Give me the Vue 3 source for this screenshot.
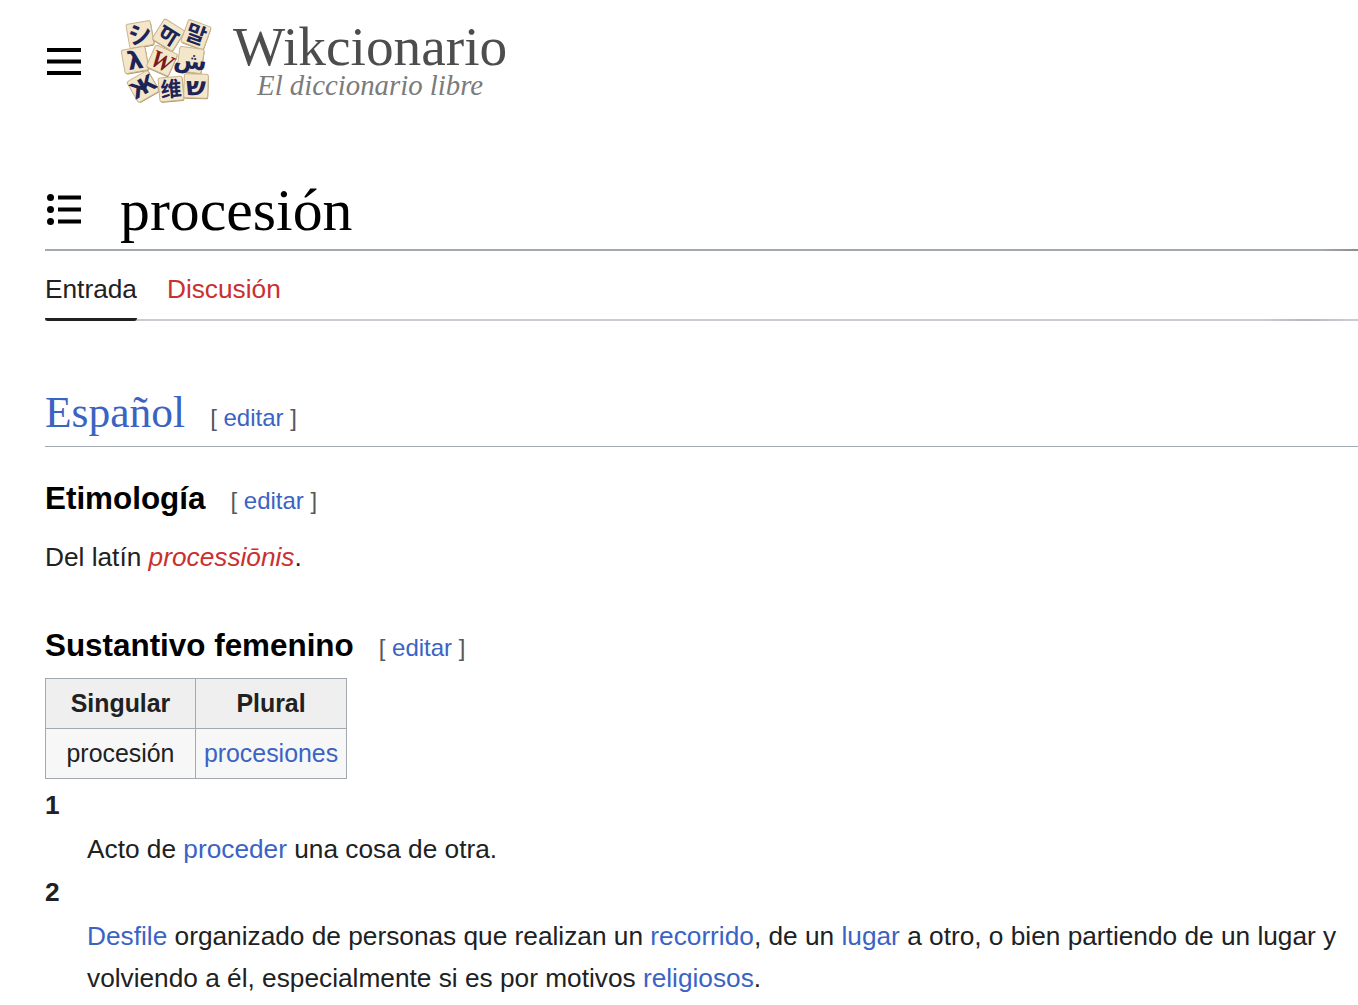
<script setup>
const tiles = [
  { x: 20, y: 16.5, s: 24.5, r: -10, t: 'シ', f: 24, c: '#1d2456' },
  { x: 48.5, y: 17, s: 24, r: 32, t: 'ण', f: 25, c: '#1d2456' },
  { x: 76, y: 16.5, s: 24, r: 20, t: '말', f: 22, c: '#1d2456' },
  { x: 15, y: 42, s: 24, r: -10, t: 'λ', f: 25, c: '#1d2456' },
  { x: 42, y: 42.5, s: 24, r: 24, t: 'W', f: 25, c: '#7c1a1a' },
  { x: 70.5, y: 42, s: 24.5, r: 8, t: 'ش', f: 24, c: '#1d2456' },
  { x: 23, y: 68.5, s: 24, r: -30, t: 'Ж', f: 22, c: '#1d2456' },
  { x: 51, y: 71, s: 24, r: -5, t: '维', f: 21, c: '#1d2456' },
  { x: 76, y: 68, s: 24, r: 2, t: 'ש', f: 26, c: '#1d2456' },
]
const senses = [
  { n: '1', parts: [['Acto de ', 0], ['proceder', 1], [' una cosa de otra.', 0]] },
  { n: '2', parts: [['Desfile', 1], [' organizado de personas que realizan un ', 0], ['recorrido', 1], [', de un ', 0], ['lugar', 1], [' a otro, o bien partiendo de un lugar y volviendo a él, especialmente si es por motivos ', 0], ['religiosos', 1], ['.', 0]] },
]
</script>

<template>
  <div class="page">
    <header class="top">
      <svg class="burger" width="34" height="27" viewBox="0 0 34 27"><path d="M0 0h34v4H0zM0 11.5h34v4H0zM0 23h34v4H0z" fill="#000"/></svg>
      <svg class="logo" width="94" height="88" viewBox="0 0 94 88">
        <g v-for="(t, i) in tiles" :key="i" :transform="`rotate(${t.r} ${t.x} ${t.y})`">
          <rect :x="t.x - t.s / 2 + 0.6" :y="t.y - t.s / 2 + 1" :width="t.s" :height="t.s" rx="2" fill="#a58a58"/>
          <rect :x="t.x - t.s / 2" :y="t.y - t.s / 2" :width="t.s" :height="t.s" rx="2" fill="#f3e6ca" stroke="#c9b68e" stroke-width="1"/>
          <text :x="t.x" :y="t.y + t.f * 0.36" :font-size="t.f" :fill="t.c" class="glyph" :class="{ serif: t.t === 'W' }" text-anchor="middle">{{ t.t }}</text>
        </g>
      </svg>
      <div class="brand">
        <div class="wordmark">Wikcionario</div>
        <div class="tagline">El diccionario libre</div>
      </div>
    </header>

    <div class="title-row">
      <svg class="toc" width="34" height="31" viewBox="0 0 34 31"><g fill="#000"><circle cx="3.5" cy="3.5" r="3.5"/><circle cx="3.5" cy="15.5" r="3.5"/><circle cx="3.5" cy="27.5" r="3.5"/><path d="M11 1.5h23v4H11zM11 13.5h23v4H11zM11 25.5h23v4H11z"/></g></svg>
      <h1>procesión</h1>
    </div>

    <nav class="tabs">
      <a class="tab active">Entrada</a>
      <a class="tab new">Discusión</a>
    </nav>

    <h2><span class="link">Español</span><span class="edit">[ <span class="link">editar</span> ]</span></h2>

    <h3 class="first"><span>Etimología</span><span class="edit">[ <span class="link">editar</span> ]</span></h3>
    <p class="etym">Del latín <i class="new">processiōnis</i>.</p>

    <h3 class="second"><span>Sustantivo femenino</span><span class="edit">[ <span class="link">editar</span> ]</span></h3>
    <table>
      <tbody>
        <tr><th>Singular</th><th>Plural</th></tr>
        <tr><td>procesión</td><td><span class="link">procesiones</span></td></tr>
      </tbody>
    </table>

    <dl>
      <template v-for="s in senses" :key="s.n">
        <dt>{{ s.n }}</dt>
        <dd><span v-for="(p, i) in s.parts" :key="i" :class="{ link: p[1] }">{{ p[0] }}</span></dd>
      </template>
    </dl>
  </div>
</template>

<style>
html, body { margin: 0; background: #fff; }
</style>

<style scoped>
.page {
  height: 1005px;
  overflow: hidden;
  box-sizing: border-box;
  padding-left: 45px;
  font-family: "Liberation Sans", Arial, sans-serif;
  font-size: 26.25px;
  color: #202122;
}
.top { display: flex; align-items: flex-start; height: 128px; }
.burger { margin: 48px 0 0 2px; flex: none; }
.logo { margin: 18px 0 0 39px; flex: none; }
.brand { margin: 16px 0 0 19px; text-align: center; font-family: "Liberation Serif", serif; }
.wordmark { font-size: 55.3px; line-height: 62px; color: #4d4d4d; }
.tagline { font-size: 28.8px; line-height: 29px; font-style: italic; color: #7b7b7b; margin-top: -7px; }
.title-row {
  display: flex;
  align-items: flex-start;
  box-sizing: border-box;
  height: 123px;
  border-bottom: 2px solid #a2a9b1;
  border-image: linear-gradient(to right, #a2a9b1 97%, #8b8b8b 100%) 2;
}
.toc { margin: 66px 0 0 2px; flex: none; }
h1 {
  margin: 47px 0 0 39px;
  font: 400 59.8px/70px "Liberation Serif", serif;
  color: #000;
}
.tabs {
  display: flex;
  gap: 30px;
  height: 70px;
  box-sizing: border-box;
  border-bottom: 2px solid #c8ccd1;
  border-image: linear-gradient(to right, #c8ccd1 93%, #b5b8bc 96%, #c8ccd1 99%) 2;
}
.tab { line-height: 76px; height: 70px; box-sizing: border-box; }
.tab.active { border-bottom: 3px solid #202122; border-radius: 0 0 3px 3px; }
.new { color: #c9302f; }
.link { color: #3a63c4; }
h2 {
  margin: 0;
  height: 126px;
  box-sizing: border-box;
  padding-top: 65px;
  border-bottom: 1px solid #a2a9b1;
  font: 400 43.5px/52px "Liberation Serif", serif;
  color: #000;
}
.edit {
  margin-left: 25px;
  font: 400 24px/30px "Liberation Sans", sans-serif;
  color: #54595d;
}
h2 .edit { vertical-align: 1px; }
h3 {
  margin: 0;
  font: 700 31.4px/40px "Liberation Sans", sans-serif;
  color: #000;
}
h3.first { margin-top: 32px; }
h3.second { margin-top: 48px; }
.etym { margin: 17px 0 0; line-height: 42px; }
table { margin-top: 12px; border-collapse: collapse; font-size: 24.9px; table-layout: fixed; }
th, td { border: 1px solid #a2a9b1; height: 49px; padding: 0; text-align: center; width: 150px; }
th:first-child { width: 149px; }
th:last-child { width: 150px; }
table { width: 301px; }
th { background: #efefef; }
td { background: #f7f7f7; }
dl { margin: 5px 0 0; }
dt { font-weight: 700; line-height: 42px; }
dd { margin: 2px 0 1px 42px; line-height: 42px; padding-right: 20px; }
.glyph { font-family: "DejaVu Sans", "Noto Sans CJK JP", sans-serif; font-weight: 700; }
.glyph.serif { font-family: "Liberation Serif", serif; font-style: italic; }
</style>
